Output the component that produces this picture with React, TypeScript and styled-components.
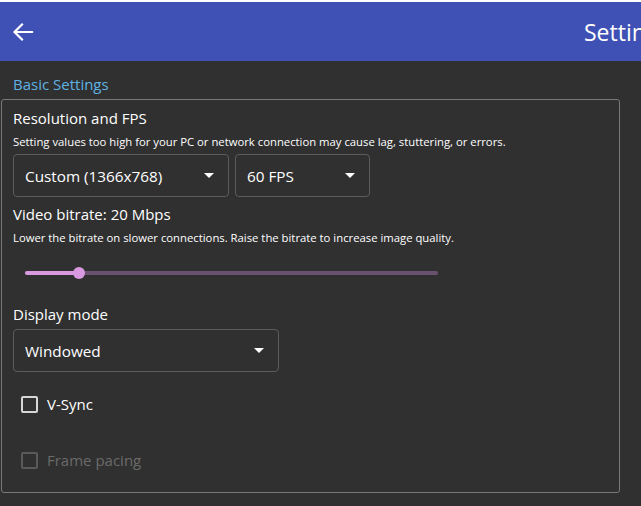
import React from "react";
import styled, { createGlobalStyle } from "styled-components";

const Global = createGlobalStyle`
  html, body { margin: 0; padding: 0; background: #303030; overflow: hidden; }
  body { font-family: "Open Sans", "Noto Sans", sans-serif; color: #ffffff; }
  * { box-sizing: border-box; }
`;

const Page = styled.div`
  width: 641px;
  height: 506px;
  background: #303030;
  border-top: 2px solid #ffffff;
  display: flex;
  flex-direction: column;
  overflow: hidden;
`;

const Header = styled.header`
  height: 59px;
  background: #3f51b5;
  display: flex;
  align-items: center;
  position: relative;
  flex-shrink: 0;
`;

const BackButton = styled.button`
  width: 44px;
  height: 44px;
  margin-left: 1px;
  background: none;
  border: none;
  padding: 0;
  display: flex;
  align-items: center;
  justify-content: center;
  color: #fff;
`;

const Title = styled.div`
  position: absolute;
  left: 584px;
  top: 14px;
  font-size: 23px;
  white-space: nowrap;
  color: #fff;
`;

const Content = styled.div`
  padding: 12px 21px 0 1px;
  display: flex;
  flex-direction: column;
`;

const SectionTitle = styled.div`
  color: #5eb2e2;
  font-size: 15px;
  padding-left: 12px;
  height: 26px;
  line-height: 22px;
`;

const GroupBox = styled.div`
  border: 1px solid #787878;
  border-radius: 3px;
  height: 394px;
  padding: 6px 11px 0 11px;
  display: flex;
  flex-direction: column;
`;

const Label = styled.div<{ $mt?: number }>`
  font-size: 15px;
  line-height: 24px;
  height: 24px;
  margin-top: ${(p) => p.$mt ?? 0}px;
  color: #fff;
`;

const Hint = styled.div`
  font-size: 11.3px;
  line-height: 20px;
  height: 20px;
  margin-top: 2px;
  color: #fff;
  white-space: nowrap;
`;

const Row = styled.div<{ $mt: number }>`
  display: flex;
  gap: 6px;
  margin-top: ${(p) => p.$mt}px;
`;

const Select = styled.div<{ $w: number }>`
  width: ${(p) => p.$w}px;
  height: 43px;
  border: 1px solid #5c5c5c;
  border-radius: 4px;
  display: flex;
  align-items: center;
  justify-content: space-between;
  padding: 0 14px 0 11px;
  font-size: 15.3px;
  color: #fff;
`;

const Caret = styled.span`
  width: 0;
  height: 0;
  border-left: 5px solid transparent;
  border-right: 5px solid transparent;
  border-top: 5px solid #fff;
`;

const SliderWrap = styled.div`
  height: 50px;
  display: flex;
  align-items: center;
  padding: 0 12px;
`;

const Track = styled.div`
  position: relative;
  width: 413px;
  height: 4px;
  border-radius: 2px;
  background: #6b5170;
`;

const Fill = styled.div`
  position: absolute;
  left: 0;
  top: 0;
  height: 4px;
  border-radius: 2px;
  background: #d899e0;
`;

const Thumb = styled.div`
  position: absolute;
  top: -4px;
  width: 12px;
  height: 12px;
  margin-left: -6px;
  border-radius: 50%;
  background: #d899e0;
`;

const CheckRow = styled.div<{ $disabled?: boolean; $mt: number }>`
  display: flex;
  align-items: center;
  gap: 9px;
  padding-left: 8px;
  height: 26px;
  margin-top: ${(p) => p.$mt}px;
  font-size: 15px;
  color: ${(p) => (p.$disabled ? "#6a6a6a" : "#fff")};
`;

const Box = styled.span<{ $disabled?: boolean }>`
  width: 17px;
  height: 17px;
  border: 2px solid ${(p) => (p.$disabled ? "#5a5a5a" : "#d6d6d6")};
  border-radius: 2px;
`;

export default function App() {
  const pct = 0.13;
  return (
    <>
      <Global />
      <Page>
        <Header>
          <BackButton aria-label="Back">
            <svg width="24" height="24" viewBox="0 0 24 24" fill="none" stroke="#fff" strokeWidth="2.2" strokeLinecap="square">
              <path d="M21 12H4M11 4.5L3.5 12l7.5 7.5" />
            </svg>
          </BackButton>
          <Title>Settings</Title>
        </Header>
        <Content>
          <SectionTitle>Basic Settings</SectionTitle>
          <GroupBox>
            <Label>Resolution and FPS</Label>
            <Hint>Setting values too high for your PC or network connection may cause lag, stuttering, or errors.</Hint>
            <Row $mt={2}>
              <Select $w={216}>
                <span>Custom (1366x768)</span>
                <Caret />
              </Select>
              <Select $w={135}>
                <span>60 FPS</span>
                <Caret />
              </Select>
            </Row>
            <Label $mt={5}>Video bitrate: 20 Mbps</Label>
            <Hint>Lower the bitrate on slower connections. Raise the bitrate to increase image quality.</Hint>
            <SliderWrap>
              <Track>
                <Fill style={{ width: `${pct * 100}%` }} />
                <Thumb style={{ left: `${pct * 100}%` }} />
              </Track>
            </SliderWrap>
            <Label $mt={4}>Display mode</Label>
            <Row $mt={3}>
              <Select $w={266}>
                <span>Windowed</span>
                <Caret />
              </Select>
            </Row>
            <CheckRow $mt={19}>
              <Box />
              <span>V-Sync</span>
            </CheckRow>
            <CheckRow $disabled $mt={30}>
              <Box $disabled />
              <span>Frame pacing</span>
            </CheckRow>
          </GroupBox>
        </Content>
      </Page>
    </>
  );
}
